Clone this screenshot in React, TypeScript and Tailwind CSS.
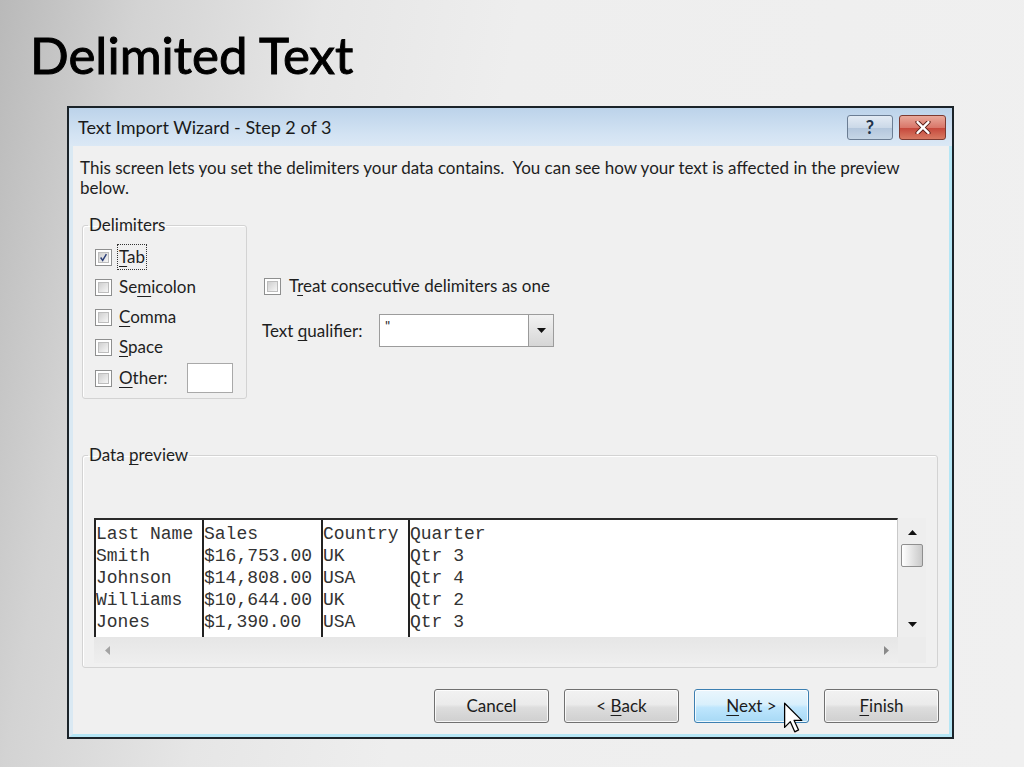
import React from "react";

function U({ children }: { children: React.ReactNode }) {
  return <span className="underline decoration-1 underline-offset-[3px]">{children}</span>;
}

function Check({ checked }: { checked?: boolean }) {
  return (
    <div className="w-[17px] h-[17px] shrink-0 border border-[#8e8f8f] bg-white p-[2px]">
      <div className="w-full h-full border border-[#bdbdbd] bg-[linear-gradient(135deg,#cfcfcf,#f6f6f6)]">
        {checked && (
          <svg viewBox="0 0 11 11" className="w-full h-full">
            <path d="M2 5.5 L4.5 9 L9 1.5" fill="none" stroke="#2b3f78" strokeWidth="1.8" />
          </svg>
        )}
      </div>
    </div>
  );
}

function Tri({ dir, color = "#111" }: { dir: "up" | "down" | "left" | "right"; color?: string }) {
  const d =
    dir === "up"
      ? "M0 5 L4.5 0 L9 5 Z"
      : dir === "down"
      ? "M0 0 L9 0 L4.5 5 Z"
      : dir === "left"
      ? "M5 0 L5 9 L0 4.5 Z"
      : "M0 0 L5 4.5 L0 9 Z";
  const vert = dir === "up" || dir === "down";
  return (
    <svg viewBox={vert ? "0 0 9 5" : "0 0 5 9"} className={vert ? "w-[9px] h-[5px]" : "w-[5px] h-[9px]"}>
      <path d={d} fill={color} />
    </svg>
  );
}

function Btn({ children, primary }: { children: React.ReactNode; primary?: boolean }) {
  return (
    <div
      className={
        "relative w-[115px] h-[34px] rounded-[3px] border flex items-center justify-center text-[17px] text-[#1c1c1c] shadow-[inset_0_0_0_1px_rgba(255,255,255,0.8)] " +
        (primary
          ? "border-[#3c7fb1] bg-[linear-gradient(to_bottom,#eaf6fd_0%,#d9f0fc_45%,#bee6fd_55%,#a7d9f5_100%)]"
          : "border-[#707070] bg-[linear-gradient(to_bottom,#f2f2f2_0%,#ebebeb_45%,#dddddd_55%,#cfcfcf_100%)]")
      }
    >
      {children}
    </div>
  );
}

const rows = [
  ["Last Name", "Sales", "Country", "Quarter"],
  ["Smith", "$16,753.00", "UK", "Qtr 3"],
  ["Johnson", "$14,808.00", "USA", "Qtr 4"],
  ["Williams", "$10,644.00", "UK", "Qtr 2"],
  ["Jones", "$1,390.00", "USA", "Qtr 3"],
];

const colW = ["w-[108px]", "w-[119px]", "w-[87px]", "flex-1"];

export default function App() {
  return (
    <div className="w-[1024px] h-[767px] overflow-hidden font-['Lato',sans-serif] text-[#1e1e1e] bg-[linear-gradient(100deg,#b9b9b9_0%,#d3d3d3_12%,#e6e6e6_28%,#eeeeee_45%,#f0f0f0_100%)]">
      <div className="h-[106px] pl-[30px] pt-[30px]">
        <h1 className="text-[51px] leading-[50px] text-black [-webkit-text-stroke:1px_#000]">Delimited Text</h1>
      </div>

      <div className="ml-[67px] w-[887px] h-[633px] border-2 border-[#1b2329] flex flex-col bg-[#f0f0f0]">
        {/* Title bar */}
        <div className="h-[38px] shrink-0 flex items-center justify-between pl-[9px] pr-[6px] bg-[linear-gradient(to_bottom,#bcd3ea,#d3e3f3_70%,#dbe8f5)]">
          <div className="text-[18px] text-[#1a1a1a]">Text Import Wizard - Step 2 of 3</div>
          <div className="flex gap-[6px]">
            <div className="w-[46px] h-[25px] rounded-[3px] border border-[#6b7d93] bg-[linear-gradient(to_bottom,#e3ebf4_0%,#cbd9e8_50%,#b3c6dc_51%,#c6d6e6_100%)] flex items-center justify-center text-[18px] leading-none font-bold text-[#22344b]">
              ?
            </div>
            <div className="w-[47px] h-[25px] rounded-[3px] border border-[#7d3a31] bg-[linear-gradient(to_bottom,#e9a99b_0%,#d9776a_50%,#c5463a_51%,#d87a63_100%)] flex items-center justify-center">
              <svg viewBox="0 0 14 12" className="w-[16px] h-[13px]">
                <path d="M2 1 L12 11 M12 1 L2 11" stroke="#5a1f18" strokeWidth="4" strokeLinecap="round" />
                <path d="M2 1 L12 11 M12 1 L2 11" stroke="#ffffff" strokeWidth="2.2" strokeLinecap="round" />
              </svg>
            </div>
          </div>
        </div>

        {/* Body */}
        <div className="flex-1 flex flex-col border-l-[4px] border-l-[#dae9f3] border-r-[3px] border-r-[#b5e6f5] border-b-[3px] border-b-[#b5e6f5] pl-[7px] pr-[10px] pt-[12px] text-[17px]">
          <p className="leading-[20px]">
            This screen lets you set the delimiters your data contains.{"\u00a0 "}You can see how your text is affected in the preview
            <br />
            below.
          </p>

          <div className="flex items-start mt-[18px]">
            <fieldset className="ml-[2px] w-[165px] border border-[#d3d3d3] rounded-[3px] shadow-[inset_1px_1px_0_#ffffff] pl-[5px] pt-[8px] pb-[4px]">
              <legend className="leading-[18px] px-[1px]">Delimiters</legend>
              <div className="flex flex-col">
                <div className="h-[30px] flex items-center pl-[7px] gap-[7px]">
                  <Check checked />
                  <span className="ml-[-2px] border border-dotted border-[#333] px-[1px] leading-[24px]">
                    <U>T</U>ab
                  </span>
                </div>
                <div className="h-[30px] flex items-center pl-[7px] gap-[7px]">
                  <Check />
                  <span>
                    Se<U>m</U>icolon
                  </span>
                </div>
                <div className="h-[30px] flex items-center pl-[7px] gap-[7px]">
                  <Check />
                  <span>
                    <U>C</U>omma
                  </span>
                </div>
                <div className="h-[30px] flex items-center pl-[7px] gap-[7px]">
                  <Check />
                  <span>
                    <U>S</U>pace
                  </span>
                </div>
                <div className="h-[32px] flex items-center pl-[7px] gap-[7px]">
                  <Check />
                  <span>
                    <U>O</U>ther:
                  </span>
                  <div className="ml-[12px] w-[46px] h-[30px] border border-[#a9a9a9] bg-white" />
                </div>
              </div>
            </fieldset>

            <div className="ml-[17px] pt-[60px] flex flex-col">
              <div className="h-[20px] flex items-center gap-[8px]">
                <Check />
                <span>
                  T<U>r</U>eat consecutive delimiters as one
                </span>
              </div>
              <div className="mt-[18px] flex items-center">
                <span className="w-[117px] ml-[-2px]">
                  Text <U>q</U>ualifier:
                </span>
                <div className="w-[175px] h-[33px] border border-[#9c9c9c] bg-white flex">
                  <div className="flex-1 pl-[5px] pt-[3px] text-[14px] leading-[16px]">"</div>
                  <div className="w-[25px] h-full border-l border-[#9a9a9a] bg-[linear-gradient(to_bottom,#f2f2f2,#d6d6d6)] flex items-center justify-center">
                    <Tri dir="down" />
                  </div>
                </div>
              </div>
            </div>
          </div>

          <fieldset className="ml-[2px] mt-[47px] w-[856px] border border-[#d3d3d3] rounded-[3px] shadow-[inset_1px_1px_0_#ffffff] pl-[11px] pt-[54px] pb-[4px]">
            <legend className="ml-[-6px] leading-[18px] px-[1px]">
              Data <U>p</U>review
            </legend>
            <div className="flex">
              <div className="w-[804px]">
                <div className="h-[119px] bg-white border-t-2 border-[#2a2a2a] border-r border-r-[#c9c9c9] flex font-['Liberation_Mono',monospace] text-[18px] text-[#333333] leading-[22px] whitespace-pre">
                  {colW.map((w, ci) => (
                    <div key={ci} className={w + " border-l-2 border-[#222] pt-[3px]"}>
                      {rows.map((r, ri) => (
                        <div key={ri}>{r[ci]}</div>
                      ))}
                    </div>
                  ))}
                </div>
                <div className="h-[26px] bg-[linear-gradient(to_bottom,#e6e6e6,#eeeeee)] flex items-center justify-between pl-[11px] pr-[9px]">
                  <Tri dir="left" color="#a3a3a3" />
                  <Tri dir="right" color="#8a8a8a" />
                </div>
              </div>
              <div className="w-[28px] flex flex-col">
                <div className="h-[119px] bg-[#eeeeee] flex flex-col items-center pt-[12px]">
                  <Tri dir="up" />
                  <div className="mt-[9px] w-[22px] h-[23px] rounded-[2px] border border-[#8f8f8f] bg-[linear-gradient(to_right,#ffffff,#e4e4e4_50%,#c9c9c9)]" />
                  <div className="flex-1" />
                  <div className="mb-[10px]">
                    <Tri dir="down" />
                  </div>
                </div>
                <div className="h-[26px] bg-[#ececec]" />
              </div>
            </div>
          </fieldset>

          <div className="mt-[21px] flex justify-end gap-[15px]">
            <Btn>Cancel</Btn>
            <Btn>
              <span>
                &lt; <U>B</U>ack
              </span>
            </Btn>
            <Btn primary>
              <span>
                <U>N</U>ext &gt;
              </span>
              <svg viewBox="0 0 16 26" className="absolute left-[88px] top-[12px] w-[21px] h-[33px]">
                <path
                  d="M1 1 L1 20 L5.5 15.5 L9 23.5 L12 22 L8.5 14.5 L14.5 14.5 Z"
                  fill="#ffffff"
                  stroke="#000000"
                  strokeWidth="1"
                  strokeLinejoin="round"
                />
              </svg>
            </Btn>
            <Btn>
              <U>F</U>inish
            </Btn>
          </div>
        </div>
      </div>
    </div>
  );
}
